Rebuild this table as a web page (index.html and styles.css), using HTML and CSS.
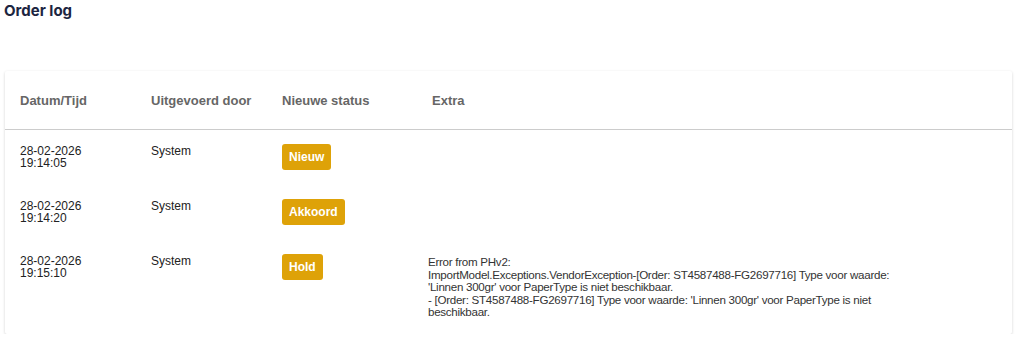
FILE: index.html
```html
<!DOCTYPE html>
<html lang="nl">
<head>
  <meta charset="UTF-8">
  <title>Order log</title>
  <link rel="stylesheet" href="styles.css">
</head>
<body>

  <h2 class="titel">Order log</h2>

  <div class="kaart">
    <table class="log">
      <thead>
        <tr>
          <th class="kol-datum">Datum/Tijd</th>
          <th class="kol-door">Uitgevoerd door</th>
          <th class="kol-status">Nieuwe status</th>
          <th>Extra</th>
        </tr>
      </thead>
      <tbody>
        <tr>
          <td>28-02-2026<br>19:14:05</td>
          <td>System</td>
          <td><span class="status">Nieuw</span></td>
          <td></td>
        </tr>
        <tr>
          <td>28-02-2026<br>19:14:20</td>
          <td>System</td>
          <td><span class="status">Akkoord</span></td>
          <td></td>
        </tr>
        <tr>
          <td>28-02-2026<br>19:15:10</td>
          <td>System</td>
          <td><span class="status">Hold</span></td>
          <td><div class="extra">Error from PHv2:<br>ImportModel.Exceptions.VendorException-[Order: ST4587488-FG2697716] Type voor waarde: 'Linnen 300gr' voor PaperType is niet beschikbaar.<br>- [Order: ST4587488-FG2697716] Type voor waarde: 'Linnen 300gr' voor PaperType is niet beschikbaar.</div></td>
        </tr>
      </tbody>
    </table>
  </div>

</body>
</html>
```

FILE: styles.css
```css
body {
  margin: 0;
  padding: 3px 12px 0 5px;
  font-family: "Liberation Sans", Arial, sans-serif;
  background-color: #fff;
  color: #222;
}
.titel {
  font-family: Inter, "Noto Sans", sans-serif;
  font-size: 15px;
  font-weight: 700;
  color: #1c2541;
  margin: 0 0 52px -1px;
  line-height: 16px;
}
.kaart {
  background-color: #fff;
  box-shadow: 0 1px 3px rgba(0, 0, 0, 0.18);
  border-radius: 2px;
}
.log {
  width: 100%;
  border-collapse: collapse;
}
.log th {
  text-align: left;
  font-size: 13px;
  font-weight: 700;
  color: #666;
  padding: 22px 15px 21px;
  border-bottom: 1px solid #ccc;
  line-height: 15px;
}
.kol-datum, .kol-door {
  width: 101px;
}
.kol-status {
  width: 120px;
}
.log td {
  vertical-align: top;
  font-size: 12px;
  line-height: 12px;
  padding: 15px 15px 15px;
}
/* foutmelding van de leverancier, smaller gezet */
.extra {
  font-size: 11.6px;
  letter-spacing: -0.28px;
  line-height: 12.5px;
  max-width: 485px;
  margin: 1px 0 0 -4px;
  color: #333;
}
.status {
  display: inline-block;
  background-color: #dea208;
  color: #fff;
  font-weight: 700;
  font-size: 12px;
  line-height: 26px;
  padding: 0 7px;
  border-radius: 3px;
  margin-top: -1px;
}
```
